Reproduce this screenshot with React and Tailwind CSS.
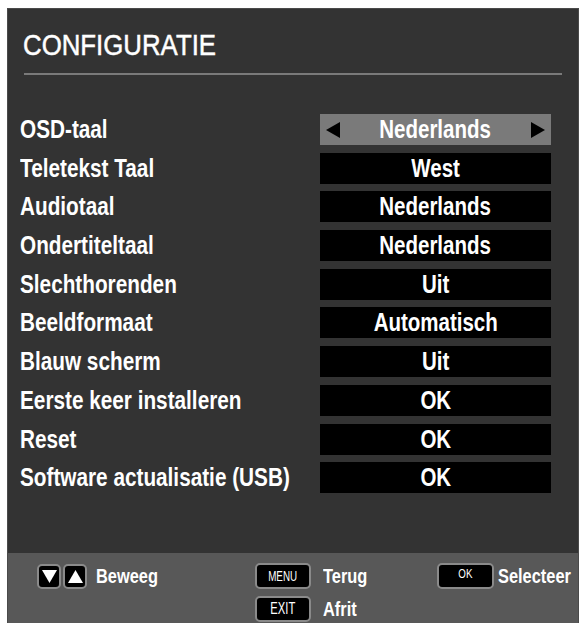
const rows = [
  { label: 'OSD-taal', value: 'Nederlands', active: true },
  { label: 'Teletekst Taal', value: 'West' },
  { label: 'Audiotaal', value: 'Nederlands' },
  { label: 'Ondertiteltaal', value: 'Nederlands' },
  { label: 'Slechthorenden', value: 'Uit' },
  { label: 'Beeldformaat', value: 'Automatisch' },
  { label: 'Blauw scherm', value: 'Uit' },
  { label: 'Eerste keer installeren', value: 'OK' },
  { label: 'Reset', value: 'OK' },
  { label: 'Software actualisatie (USB)', value: 'OK' },
]

// narrow look: Liberation Sans squeezed horizontally
const narrow = 'inline-block whitespace-nowrap scale-x-[0.82]'

function KeyCap({ children, className = '' }) {
  return (
    <div
      className={`flex shrink-0 items-center justify-center rounded-[5px] border-2 border-[#8a8a8a] bg-black text-white ${className}`}
    >
      {children}
    </div>
  )
}

function Arrow({ dir }) {
  return (
    <svg width="14" height="16" viewBox="0 0 14 16">
      {dir === 'left' ? <polygon points="14,0 14,16 0,8" fill="#000" /> : <polygon points="0,0 0,16 14,8" fill="#000" />}
    </svg>
  )
}

export default function App() {
  return (
    <div className="min-h-[623px] w-[584px] bg-white pl-[7px] pt-[8px] font-['Liberation_Sans',Arial,sans-serif] text-white">
      <div className="flex h-[615px] w-[572px] flex-col overflow-hidden border-t border-l border-r border-[#4a4a4a] bg-[#333333]">
        {/* Header */}
        <div className="px-[15px] pt-[21px] text-[30px] leading-none">
          <span className="inline-block origin-left scale-x-[0.86] whitespace-nowrap [-webkit-text-stroke:0.5px_white]">
            CONFIGURATIE
          </span>
        </div>
        <div className="mx-[16px] mt-[13px] h-[2px] bg-[#7a7a7a]" />

        {/* Settings */}
        <div className="mt-[39px] flex flex-col gap-[7.7px] pl-[12px]">
          {rows.map((r) => (
            <div key={r.label} className="grid h-[31px] grid-cols-[300px_231px] items-center">
              <span className="text-[25px] font-bold leading-none">
                <span className={`${narrow} origin-left scale-x-[0.83]`}>{r.label}</span>
              </span>
              <div
                className={`relative flex h-[31px] items-center justify-center text-[25px] font-bold leading-none ${
                  r.active ? 'bg-[#7a7a7a]' : 'bg-black'
                }`}
              >
                {r.active && (
                  <div className="absolute inset-0 flex items-center justify-between px-[6px]">
                    <Arrow dir="left" />
                    <Arrow dir="right" />
                  </div>
                )}
                <span className={`${narrow} relative origin-center`}>{r.value}</span>
              </div>
            </div>
          ))}
        </div>

        <div className="flex-1" />

        {/* Footer */}
        <div className="flex h-[70px] shrink-0 bg-[#585858] pt-[10px] text-[20px] font-bold leading-none">
          <div className="flex h-[26px] w-[247px] shrink-0 items-center pl-[29px]">
            <KeyCap className="h-[25px] w-[24px]">
              <svg width="15" height="13" viewBox="0 0 15 13">
                <polygon points="0,0 15,0 7.5,13" fill="#fff" />
              </svg>
            </KeyCap>
            <KeyCap className="ml-[2px] h-[25px] w-[24px]">
              <svg width="15" height="13" viewBox="0 0 15 13">
                <polygon points="0,13 15,13 7.5,0" fill="#fff" />
              </svg>
            </KeyCap>
            <span className={`${narrow} ml-[9px] origin-left`}>Beweeg</span>
          </div>
          <div className="flex w-[182px] shrink-0 flex-col gap-[7px]">
            <div className="flex h-[26px] items-center">
              <KeyCap className="h-[26px] w-[56px] text-[14px] font-normal">
                <span className="inline-block scale-x-[0.7]">MENU</span>
              </KeyCap>
              <span className={`${narrow} ml-[12px] origin-left`}>Terug</span>
            </div>
            <div className="flex h-[26px] items-center">
              <KeyCap className="h-[26px] w-[56px] text-[16px] font-normal">
                <span className="inline-block scale-x-[0.7]">EXIT</span>
              </KeyCap>
              <span className={`${narrow} ml-[12px] origin-left`}>Afrit</span>
            </div>
          </div>
          <div className="flex h-[26px] shrink-0 items-center">
            <KeyCap className="h-[26px] w-[57px] text-[13px] font-normal">
              <span className="inline-block -translate-y-[3px] scale-x-[0.75]">OK</span>
            </KeyCap>
            <span className={`${narrow} ml-[4px] origin-left`}>Selecteer</span>
          </div>
        </div>
      </div>
    </div>
  )
}
